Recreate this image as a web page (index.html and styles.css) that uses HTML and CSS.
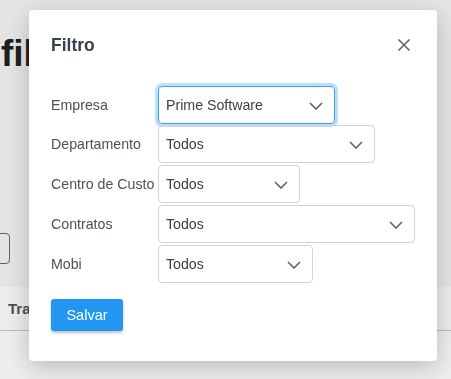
FILE: index.html
```html
<!DOCTYPE html>
<html lang="pt-BR">
<head>
  <meta charset="UTF-8">
  <meta name="viewport" content="width=device-width, initial-scale=1.0">
  <title>Filtro</title>
  <link rel="stylesheet" href="styles.css">
</head>
<body>

  <!-- Page behind the modal -->
  <div class="page">
    <div class="page-top">
      <h1 class="page-title">fil</h1>
      <button class="outline-button" aria-label="Filtrar"></button>
    </div>
    <div class="table-head">Tra</div>
  </div>

  <!-- Modal -->
  <div class="overlay">
    <div class="modal">
      <div class="modal-header">
        <div class="modal-title">Filtro</div>
        <button class="close-button" aria-label="Fechar">
          <svg width="14" height="14" viewBox="0 0 14 14"><path d="M1.5 1.5 L12.5 12.5 M12.5 1.5 L1.5 12.5" stroke="#5b6570" stroke-width="1.6" fill="none"/></svg>
        </button>
      </div>

      <div class="modal-body">
        <div class="form-row">
          <label>Empresa</label>
          <div class="select focused w-empresa">Prime Software
            <svg class="chevron" width="14" height="8" viewBox="0 0 14 8"><path d="M1 1 L7 7 L13 1" stroke="#5d636b" stroke-width="1.6" fill="none"/></svg>
          </div>
        </div>
        <div class="form-row">
          <label>Departamento</label>
          <div class="select w-dep">Todos
            <svg class="chevron" width="14" height="8" viewBox="0 0 14 8"><path d="M1 1 L7 7 L13 1" stroke="#5d636b" stroke-width="1.6" fill="none"/></svg>
          </div>
        </div>
        <div class="form-row">
          <label>Centro de Custo</label>
          <div class="select w-centro">Todos
            <svg class="chevron" width="14" height="8" viewBox="0 0 14 8"><path d="M1 1 L7 7 L13 1" stroke="#5d636b" stroke-width="1.6" fill="none"/></svg>
          </div>
        </div>
        <div class="form-row">
          <label>Contratos</label>
          <div class="select w-contratos">Todos
            <svg class="chevron" width="14" height="8" viewBox="0 0 14 8"><path d="M1 1 L7 7 L13 1" stroke="#5d636b" stroke-width="1.6" fill="none"/></svg>
          </div>
        </div>
        <div class="form-row">
          <label>Mobi</label>
          <div class="select w-mobi">Todos
            <svg class="chevron" width="14" height="8" viewBox="0 0 14 8"><path d="M1 1 L7 7 L13 1" stroke="#5d636b" stroke-width="1.6" fill="none"/></svg>
          </div>
        </div>

        <button class="save-button">Salvar</button>
      </div>
    </div>
  </div>

</body>
</html>
```

FILE: styles.css
```css
/* Basic reset */
* {
  margin: 0;
  padding: 0;
  box-sizing: border-box;
  font-family: "Liberation Sans", Arial, sans-serif;
}

body {
  background-color: #ffffff;
  height: 100vh;
  overflow: hidden;
}

/* Page behind the overlay */
.page-top {
  background-color: #f6f6f6;
  height: 287px;
  padding-top: 32px;
}

.page-title {
  font-size: 37px;
  font-weight: bold;
  color: #222;
  margin-left: 1px;
  line-height: 44px;
}

.outline-button {
  display: block;
  margin: 157px 0 0 -60px;
  width: 70px;
  height: 31px;
  border: 1px solid #5c6f80;
  border-radius: 4px;
  background: transparent;
}

.table-head {
  height: 44px;
  line-height: 44px;
  padding-left: 8px;
  font-size: 15px;
  font-weight: bold;
  color: #555;
  background-color: #fefefe;
  border-bottom: 1px solid #c8c8c8;
}

.overlay {
  position: fixed;
  top: 0;
  left: 0;
  right: 0;
  bottom: 0;
  background-color: rgba(0, 0, 0, 0.07);
  padding: 10px 0 0 29px;
}

/* Modal */
.modal {
  width: 408px;
  height: 351px;
  background-color: #ffffff;
  border-radius: 4px;
  box-shadow: 0 6px 24px rgba(0, 0, 0, 0.22);
}

.modal-header {
  display: flex;
  justify-content: space-between;
  align-items: flex-start;
  padding: 24px 26px 0 22px;
  height: 60px;
}

.modal-title {
  font-size: 17.5px;
  font-weight: bold;
  color: #37424c;
  line-height: 22px;
}

.close-button {
  border: none;
  background: none;
  margin-top: 4px;
  width: 14px;
  height: 14px;
  cursor: pointer;
}

.modal-body {
  padding: 15px 22px 0 22px;
}

.form-row {
  display: flex;
  align-items: center;
  height: 40px;
}

.form-row:first-child {
  height: 39px;
}

.form-row label {
  width: 107px;
  font-size: 14.2px;
  color: #4b5158;
  white-space: nowrap;
}

.select {
  position: relative;
  height: 38px;
  line-height: 36px;
  padding-left: 7px;
  font-size: 14.2px;
  color: #3a3f45;
  border: 1px solid #ced4da;
  border-radius: 4px;
}

.select.focused {
  border-color: #3d9df3;
  box-shadow: 0 0 0 3px rgba(33, 150, 243, 0.3);
}

.chevron {
  position: absolute;
  right: 11px;
  top: 15px;
}

.w-empresa { width: 177px; }
.w-dep { width: 217px; }
.w-centro { width: 142px; }
.w-contratos { width: 257px; }
.w-mobi { width: 155px; }

.save-button {
  margin-top: 15px;
  width: 72px;
  height: 32px;
  border: none;
  border-radius: 3px;
  background-color: #2196f3;
  color: #ffffff;
  font-size: 14.5px;
  box-shadow: 0 2px 3px rgba(0, 0, 0, 0.25);
  cursor: pointer;
}
```
